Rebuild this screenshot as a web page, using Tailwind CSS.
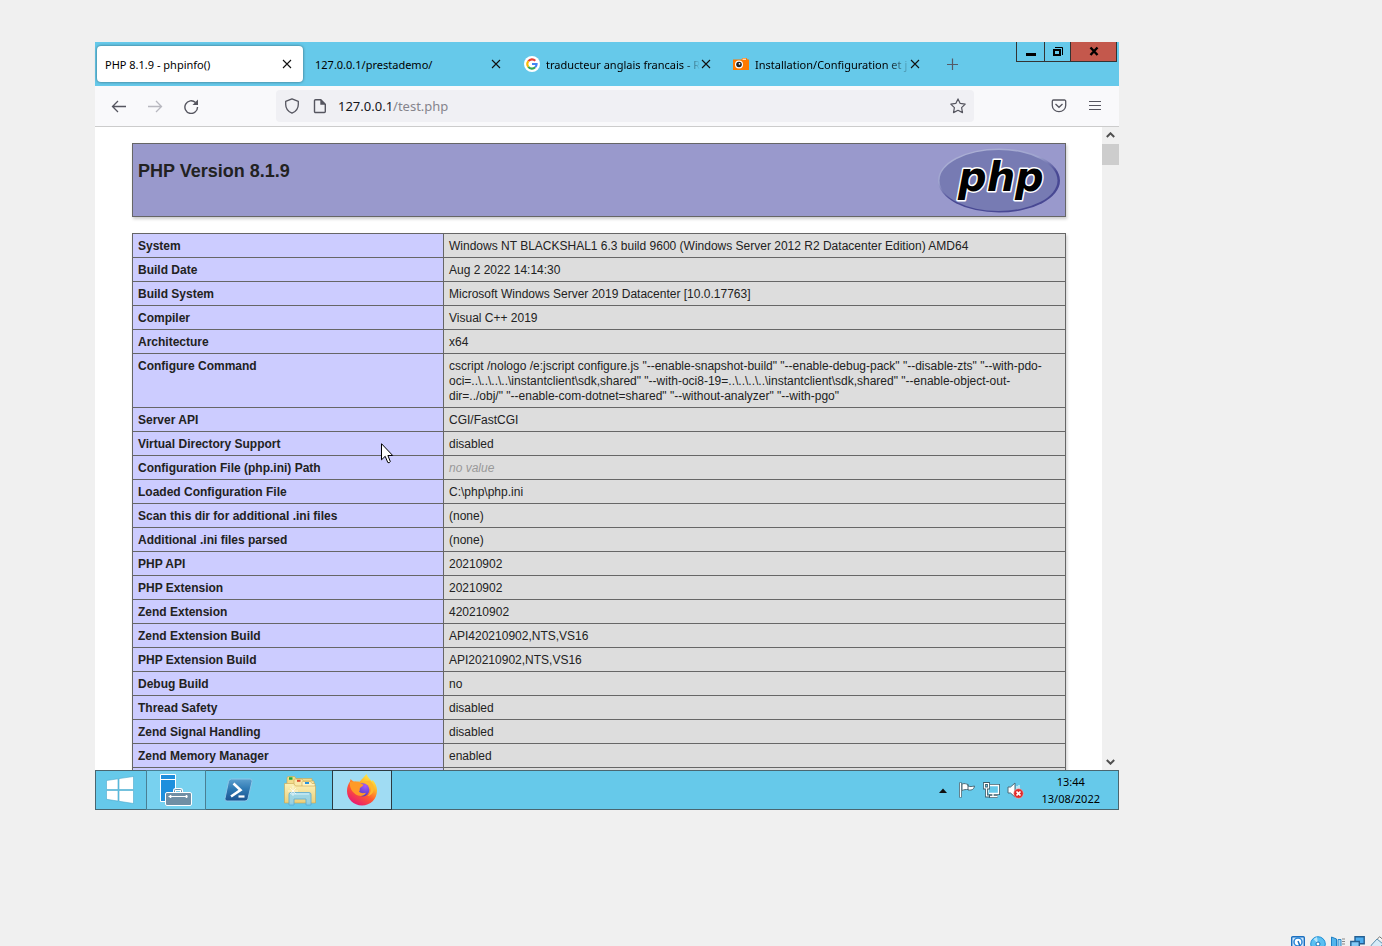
<!DOCTYPE html>
<html lang="fr">
<head>
<meta charset="utf-8">
<title>PHP 8.1.9 - phpinfo()</title>
<script src="https://cdn.jsdelivr.net/npm/@tailwindcss/browser@4"></script>
</head>
<body class="bg-[#f0f0f0]">
<div class="flex h-screen flex-col overflow-hidden font-['Noto_Sans',sans-serif] text-black">
  <main class="relative mt-[42px] mr-[263px] mb-[126px] ml-[95px] flex min-h-0 flex-1 flex-col bg-white">

    <!-- Tab strip -->
    <header class="flex h-11 shrink-0 items-center bg-[#66c9ea] pl-0.5 text-[11px] leading-4">
      <nav class="flex min-w-0 gap-[3px]" aria-label="Onglets">
        <div class="flex h-9 w-[206px] items-center rounded bg-white pr-2.5 pl-2 shadow-[0_0_3px_rgba(0,0,0,0.5)]">
          <a href="#" class="min-w-0 flex-1 overflow-hidden pt-0.5 whitespace-nowrap">PHP 8.1.9 - phpinfo()</a>
          <button aria-label="Fermer"><svg width="12" height="12" viewBox="0 0 12 12" stroke="#111" stroke-width="1.1"><path d="M2 2l8 8M10 2l-8 8"/></svg></button>
        </div>
        <div class="flex h-9 w-[206px] items-center pr-2.5 pl-[9px]">
          <a href="#" class="min-w-0 flex-1 overflow-hidden pt-0.5 whitespace-nowrap">127.0.0.1/prestademo/</a>
          <button aria-label="Fermer"><svg width="12" height="12" viewBox="0 0 12 12" stroke="#111" stroke-width="1.1"><path d="M2 2l8 8M10 2l-8 8"/></svg></button>
        </div>
        <div class="flex h-9 w-[206px] items-center pr-[9px] pl-[9px]">
          <svg class="mr-1.5 shrink-0" width="16" height="16" viewBox="0 0 16 16"><circle cx="8" cy="8" r="8" fill="#fff"/><g fill="none" stroke-width="2.1"><path d="M4.300 5.200A4.600 4.600 0 0 1 11.300 4.800" stroke="#ea4335"/><path d="M4.300 10.800a4.600 4.600 0 0 1 0-5.600" stroke="#fbbc05"/><path d="M11.200 11.300a4.600 4.600 0 0 1-6.900-.5" stroke="#34a853"/><path d="M8 8h4.600a4.600 4.600 0 0 1-1.400 3.300" stroke="#4285f4"/></g></svg>
          <a href="#" class="min-w-0 flex-1 overflow-hidden bg-linear-to-r from-black from-90% to-black/0 bg-clip-text pt-0.5 whitespace-nowrap text-transparent">traducteur anglais francais - R</a>
          <button aria-label="Fermer"><svg width="12" height="12" viewBox="0 0 12 12" stroke="#111" stroke-width="1.1"><path d="M2 2l8 8M10 2l-8 8"/></svg></button>
        </div>
        <div class="flex h-9 w-[206px] items-center pr-[9px] pl-[9px]">
          <svg class="mr-1.5 shrink-0" width="16" height="16" viewBox="0 0 16 16"><path d="M0 3.500h8.500L9.500 2h4l1 1.500H16V14H0z" fill="#ff7a00"/><path d="M9.500 3.200h3.500" stroke="#fff"/><circle cx="6" cy="8.500" r="4" fill="#fff"/><circle cx="6" cy="8.500" r="2.800" fill="#222"/><circle cx="6.500" cy="7.800" r=".9" fill="#fff"/></svg>
          <a href="#" class="min-w-0 flex-1 overflow-hidden bg-linear-to-r from-black from-85% to-black/10 bg-clip-text pt-0.5 whitespace-nowrap text-transparent">Installation/Configuration et j</a>
          <button aria-label="Fermer"><svg width="12" height="12" viewBox="0 0 12 12" stroke="#111" stroke-width="1.1"><path d="M2 2l8 8M10 2l-8 8"/></svg></button>
        </div>
      </nav>
      <button class="ml-4" aria-label="Nouvel onglet"><svg width="14" height="14" viewBox="0 0 14 14" stroke="#555b66" stroke-width="1.2"><path d="M6.500 1.500v11.500M1 7.500h11"/></svg></button>
      <div class="mr-0.5 ml-auto flex self-start border border-t-0 border-[#333]">
        <button aria-label="Réduire" class="flex h-[19px] w-7 items-center justify-center border-r border-[#333]"><svg width="12" height="12"><path d="M1 7h10v3H1z"/></svg></button>
        <button aria-label="Restaurer" class="flex h-[19px] w-[26px] items-center justify-center border-r border-[#333]"><svg width="12" height="12" fill="none" stroke="#000"><path d="M2 4h6v5H2z" stroke-width="2"/><path d="M3 1.500h7.500V9" /></svg></button>
        <button aria-label="Fermer la fenêtre" class="flex h-[19px] w-[45px] items-center justify-center bg-[#c4584c]"><svg width="10" height="12" stroke="#000" stroke-width="2.400"><path d="M1.500 1.500l7 7.500M8.500 1.500l-7 7.500"/></svg></button>
      </div>
    </header>

    <!-- Navigation toolbar -->
    <div class="flex h-[41px] shrink-0 items-center border-b border-[#ccc] bg-[#f9f9fb] pl-4">
      <button aria-label="Précédent"><svg width="16" height="16" fill="none" stroke="#55555f" stroke-width="1.300"><path d="M15 8.500H1.500M7 3L1.500 8.500 7 14"/></svg></button>
      <button aria-label="Suivant" class="ml-5"><svg width="16" height="16" fill="none" stroke="#b8b8bf" stroke-width="1.300"><path d="M1 8.500h13.500M9 3l5.500 5.500L9 14"/></svg></button>
      <button aria-label="Actualiser" class="ml-5"><svg width="16" height="16" fill="none" stroke="#55555f" stroke-width="1.400"><path d="M12.500 4.500A6.300 6.300 0 1 0 14.500 9"/><path d="M15 1.500V7H9.500z" fill="#55555f" stroke="none"/></svg></button>
      <div class="ml-[77px] flex h-8 min-w-0 flex-1 items-center rounded bg-[#f0f0f4] px-2">
        <svg width="16" height="16" fill="none" stroke="#55555f" stroke-width="1.300"><path d="M8 .8l6.300 2.500v3.200C14.300 10.500 11.500 13.700 8 15.200 4.500 13.700 1.700 10.500 1.700 6.500V3.300z" stroke-linejoin="round"/></svg>
        <svg class="ml-3" width="16" height="16" fill="none" stroke="#55555f" stroke-width="1.400"><path d="M3.500 1.700h5.300l4.500 4.500v7.300a1 1 0 0 1-1 1H3.500a1 1 0 0 1-1-1V2.700a1 1 0 0 1 1-1z"/><path d="M8.300 1.500v5.200h5.200z" fill="#55555f" stroke="none"/></svg>
        <div class="ml-2.5 flex-1 pt-0.5 text-[13px] text-[#15141a]">127.0.0.1<span class="text-[#85848c]">/test.php</span></div>
        <button aria-label="Marquer cette page"><svg width="16" height="16" fill="none" stroke="#55555f" stroke-width="1.200" stroke-linejoin="round"><path d="M8 .9l2.200 4.500 5 .7-3.600 3.500.9 5L8 12.300l-4.500 2.300.9-5L.8 6.100l5-.7z"/></svg></button>
      </div>
      <button class="ml-[77px]" aria-label="Pocket"><svg width="16" height="16" fill="none" stroke="#55555f" stroke-width="1.300"><path d="M2.500 2h11a1.200 1.200 0 0 1 1.200 1.200V7.500a6.700 6.200 0 0 1-13.400 0V3.200A1.200 1.200 0 0 1 2.500 2z"/><path d="M4.500 6L8 9.300 11.500 6"/></svg></button>
      <button class="mr-4 ml-5" aria-label="Menu"><svg width="16" height="16" stroke="#55555f" stroke-width="1.200"><path d="M2 3.500h12M2 7.500h12M2 11.500h12"/></svg></button>
    </div>

    <!-- Page -->
    <div class="flex min-h-0 flex-1">
      <div class="min-w-0 flex-1 overflow-hidden pt-4 pr-9 pl-[37px] font-['Liberation_Sans',sans-serif] text-[12px] leading-[15px] text-[#222]">
        <div class="flex h-[74px] items-start justify-between border border-[#666] bg-[#9999cc] px-[5px] shadow-[1px_2px_3px_#ccc]">
          <h1 class="pt-4 text-[18px] leading-[22px] font-bold">PHP Version 8.1.9</h1>
          <svg class="mt-1" width="122" height="65" viewBox="0 0 122 65" role="img" aria-label="PHP">
            <defs><linearGradient id="rim" x1=".2" y1="0" x2=".7" y2="1"><stop offset="0" stop-color="#aeb2d5"/><stop offset=".35" stop-color="#9fa4cf"/><stop offset=".6" stop-color="#484893"/></linearGradient></defs>
            <ellipse cx="61" cy="32.500" rx="61" ry="32" fill="url(#rim)"/>
            <ellipse cx="60.500" cy="32.500" rx="59" ry="30.500" fill="#777bb3"/>
            <text x="20" y="43" font-family="DejaVu Sans" font-size="40" font-weight="bold" font-style="italic" stroke="#fff" stroke-width="3" stroke-linejoin="round" paint-order="stroke" fill="#000">php</text>
          </svg>
        </div>
        <table class="mt-4 w-full table-fixed border-collapse shadow-[1px_2px_3px_#ccc] [&_td]:border [&_td]:border-[#666] [&_td]:bg-[#ddd] [&_td]:px-[5px] [&_td]:pt-[5px] [&_td]:pb-[3px] [&_th]:w-[311px] [&_th]:border [&_th]:border-[#666] [&_th]:bg-[#ccccff] [&_th]:px-[5px] [&_th]:pt-[5px] [&_th]:pb-[3px] [&_th]:text-left [&_th]:align-top">
          <tbody>
            <tr><th scope="row">System</th><td>Windows NT BLACKSHAL1 6.3 build 9600 (Windows Server 2012 R2 Datacenter Edition) AMD64</td></tr>
            <tr><th scope="row">Build Date</th><td>Aug 2 2022 14:14:30</td></tr>
            <tr><th scope="row">Build System</th><td>Microsoft Windows Server 2019 Datacenter [10.0.17763]</td></tr>
            <tr><th scope="row">Compiler</th><td>Visual C++ 2019</td></tr>
            <tr><th scope="row">Architecture</th><td>x64</td></tr>
            <tr><th scope="row">Configure Command</th><td>cscript /nologo /e:jscript configure.js "--enable-snapshot-build" "--enable-debug-pack" "--disable-zts" "--with-pdo-<br>oci=..\..\..\..\instantclient\sdk,shared" "--with-oci8-19=..\..\..\..\instantclient\sdk,shared" "--enable-object-out-<br>dir=../obj/" "--enable-com-dotnet=shared" "--without-analyzer" "--with-pgo"</td></tr>
            <tr><th scope="row">Server API</th><td>CGI/FastCGI</td></tr>
            <tr><th scope="row">Virtual Directory Support</th><td>disabled</td></tr>
            <tr><th scope="row">Configuration File (php.ini) Path</th><td><i class="text-[#999]">no value</i></td></tr>
            <tr><th scope="row">Loaded Configuration File</th><td>C:\php\php.ini</td></tr>
            <tr><th scope="row">Scan this dir for additional .ini files</th><td>(none)</td></tr>
            <tr><th scope="row">Additional .ini files parsed</th><td>(none)</td></tr>
            <tr><th scope="row">PHP API</th><td>20210902</td></tr>
            <tr><th scope="row">PHP Extension</th><td>20210902</td></tr>
            <tr><th scope="row">Zend Extension</th><td>420210902</td></tr>
            <tr><th scope="row">Zend Extension Build</th><td>API420210902,NTS,VS16</td></tr>
            <tr><th scope="row">PHP Extension Build</th><td>API20210902,NTS,VS16</td></tr>
            <tr><th scope="row">Debug Build</th><td>no</td></tr>
            <tr><th scope="row">Thread Safety</th><td>disabled</td></tr>
            <tr><th scope="row">Zend Signal Handling</th><td>disabled</td></tr>
            <tr><th scope="row">Zend Memory Manager</th><td>enabled</td></tr>
            <tr><th scope="row">&nbsp;</th><td></td></tr>
          </tbody>
        </table>
      </div>
      <div class="flex w-[17px] shrink-0 flex-col bg-[#f0f0f0]">
        <button aria-label="Défiler vers le haut" class="flex h-[17px] items-center justify-center"><svg width="9" height="7" fill="none" stroke="#505050" stroke-width="2"><path d="M.8 5l3.700-3.700L8.200 5"/></svg></button>
        <div class="h-[21px] bg-[#cdcdcd]"></div>
        <button aria-label="Défiler vers le bas" class="mt-auto flex h-[17px] items-center justify-center"><svg width="9" height="7" fill="none" stroke="#505050" stroke-width="2"><path d="M.8 2l3.700 3.700L8.200 2"/></svg></button>
      </div>
    </div>

    <!-- Taskbar -->
    <footer class="flex h-10 shrink-0 items-stretch border border-[#4a6670] bg-[#66c9ea]">
      <button aria-label="Démarrer" class="flex w-[50px] items-center justify-center pr-0.5"><svg width="28" height="28" viewBox="0 0 28 28" fill="#fff" stroke="#4aa9cc" stroke-width=".6"><path d="M.5 4.500l11.500-1.700v10.700H.5zM13 2.600L27.500.5v13H13zM.5 14.500H12v10.600L.5 23.300zM13 14.500h14.500v13L13 25.300z"/></svg></button>
      <button aria-label="Gestionnaire de serveur" class="-my-px flex w-[60px] items-center justify-center border border-[#4a7f93] bg-[#78d1ef]">
        <svg width="32" height="32" viewBox="0 0 32 32"><path d="M.5.500h15v27H.5z" fill="#1e8fdd" stroke="#fff"/><path d="M0 5.500h16" stroke="#fff"/><path d="M14.500 18v-1.500a1 1 0 0 1 1-1h5a1 1 0 0 1 1 1V18" fill="none" stroke="#fff" stroke-width="3"/><path d="M14.500 18v-1.500a1 1 0 0 1 1-1h5a1 1 0 0 1 1 1V18" fill="none" stroke="#708fa5"/><rect x="5.500" y="18.500" width="26" height="13" rx="1.500" fill="#708fa5" stroke="#fff"/><path d="M8.500 22.500h19" stroke="#fff"/><path d="M10.500 21v3M26.500 21v3" stroke="#fff" stroke-width="1.600"/></svg>
      </button>
      <button aria-label="PowerShell" class="ml-0.5 flex w-[60px] items-center justify-center">
        <svg width="30" height="28" viewBox="0 0 30 28"><defs><linearGradient id="ps" x1="0" y1="0" x2="0" y2="1"><stop offset="0" stop-color="#5c9fce"/><stop offset=".45" stop-color="#2f7ab4"/><stop offset="1" stop-color="#1b5290"/></linearGradient></defs><path d="M8.500 3h18.500q2.500 0 2 2.500L25 22.500q-.6 2.500-3 2.500H4q-2.500 0-2-2.500L5.500 5.500Q6 3 8.500 3z" fill="url(#ps)" stroke="#8cc6e8"/><path d="M10.500 7.500l7 6.500-9.500 6.500" fill="none" stroke="#fff" stroke-width="2.600"/><path d="M15.500 20.500h6" stroke="#fff" stroke-width="2.200"/></svg>
      </button>
      <button aria-label="Explorateur" class="ml-0.5 flex w-[60px] items-center justify-center">
        <svg width="32" height="32" viewBox="0 0 32 32"><defs><linearGradient id="fo" x1="0" y1="0" x2="0" y2="1"><stop offset="0" stop-color="#fcf1b8"/><stop offset="1" stop-color="#ecd07a"/></linearGradient></defs><g stroke="#c9a650" stroke-width=".6"><path d="M3 10V4q0-1.500 1.500-1.500h6L12 4.500h16v8H3z" fill="#f3dc8c"/><path d="M10 10V6q0-1 1-1h7l1.500 2H30v6H10z" fill="#f9e9a9"/><path d="M18 11V8.500q0-1 1-1h7.500L28 9.500h3v6H18z" fill="#fff3c0"/><path d="M.5 9.500h9l2 2.500h20v17H.5z" fill="url(#fo)"/></g><path d="M5 4.500h3.500" stroke="#1fad3f" stroke-width="2.500"/><path d="M13 6.800h3.500" stroke="#d84b2b" stroke-width="2"/><path d="M21 9h4" stroke="#2793de" stroke-width="2"/><path d="M5 31V20.500q0-2 2-2h18q2 0 2 2V31h-5v-6H10v6z" fill="#8fd3f1" fill-opacity=".85" stroke="#5aa9d2" stroke-width=".8"/><path d="M7 20h18" stroke="#d9f3fc"/><path d="M9 12v10M4 17h10M6 14l6 6M12 14l-6 6" stroke="#fff" stroke-opacity=".8" stroke-width=".8"/></svg>
      </button>
      <button aria-label="Firefox" class="-my-px ml-0.5 flex w-[60px] items-center justify-center border border-[#2c3a40] bg-[#a0dcf3]">
        <svg width="32" height="32" viewBox="0 0 32 32"><defs><linearGradient id="ff" x1=".8" y1=".05" x2=".25" y2=".95"><stop offset="0" stop-color="#fff04a"/><stop offset=".3" stop-color="#ffb62a"/><stop offset=".6" stop-color="#ff5a30"/><stop offset="1" stop-color="#e81a72"/></linearGradient><radialGradient id="gl" cx=".7" cy=".2" r=".9"><stop offset="0" stop-color="#a45cff"/><stop offset="1" stop-color="#4a35b5"/></radialGradient></defs><path d="M20.500 0c1 3.500 3.800 5 5.500 7.500l.5-1.500c2.700 2.500 4.500 6.500 4.500 10.500 0 8.500-6.500 15-15 15S1 25 1 17c0-4 1.500-7.500 3-9.500L4.500 5l3.500 3c2-.6 4-.5 5.500-.2C15.500 5.500 18 3 20.500 0z" fill="url(#ff)"/><circle cx="16.800" cy="15.800" r="6.600" fill="url(#gl)"/><path d="M4 8c3-1 7-.5 9 1 1 .8 4 1.200 4.500 1.500-.3 1.800-2.500 2.300-3.500 3.500-.6 1 .3 2.500-1 3.500 1.500 2 4.500 2 7 1.200-1.500 3-5 4-8 2.800C6 19 3 13 4 8z" fill="#ff9a28"/><path d="M18 7.500c4 .5 7 3.500 7 7.500 0 3-1.300 5.500-3.500 7 4-.5 6.500-4 6.500-8 0-3-2-6-4.500-7.500z" fill="#ffb92f"/></svg>
      </button>
      <div class="ml-auto flex items-center">
        <button aria-label="Icônes cachées"><svg width="8" height="5"><path d="M0 5l4-4.500L8 5z" fill="#111"/></svg></button>
        <svg class="ml-3" width="17" height="17" viewBox="0 0 17 17" role="img" aria-label="Centre de maintenance"><path d="M1.500.5v15" stroke="#4c6b78" stroke-width="3"/><path d="M3 2c3-1 4 0 6 .5V4c2 1 4 .5 6.500 0-.5 3-2 4.500-6.500 4v-.5C7 7.500 5 7.500 3 8.500z" fill="#fff" stroke="#4c6b78"/><path d="M9 2.500V8" stroke="#4c6b78"/><path d="M1.500 1v14" stroke="#fff" stroke-width="1.300"/></svg>
        <svg class="ml-[7px]" width="17" height="17" viewBox="0 0 17 17" fill="#66c9ea" role="img" aria-label="Réseau"><path d="M5 3.500h10.500v8H5zM10 12v2.500M6 14.500h8.500" stroke="#3c5b68" stroke-width="3"/><path d="M5 3.500h10.500v8H5zM10 12v2.500M6.500 14.500h8" stroke="#fff" stroke-width="1.300"/><path d="M1.500 1.500h4V6h-4zM3.500 6v8H7" stroke="#3c5b68" stroke-width="2.800"/><path d="M1.500 1.500h4V6h-4zM3.500 6v8H6" fill="none" stroke="#fff" stroke-width="1.200"/></svg>
        <svg class="ml-[7px]" width="17" height="17" viewBox="0 0 17 17" role="img" aria-label="Son coupé"><path d="M1 5h2.500L8 1v14l-4.500-4H1z" fill="#fff" stroke="#4c6b78"/><path d="M10 4v4M12 3v4" stroke="#fff"/><circle cx="11.500" cy="11.500" r="4.800" fill="#e02a2a" stroke="#f7b5b5" stroke-width=".6"/><path d="M9.500 9.500l4 4M13.500 9.500l-4 4" stroke="#fff" stroke-width="1.700"/></svg>
        <time class="mr-[18px] ml-[17px] text-center text-[11px] leading-[17px]">13:44<br>13/08/2022</time>
      </div>
    </footer>

    <!-- Mouse pointer -->
    <svg class="absolute top-[401px] left-[286px]" width="13" height="21" viewBox="0 0 13 21"><path d="M.5.700v16.100l3.700-3.500 2.600 6.200q1.500 1 2.500-.9L6.900 12.500h4.800z" fill="#fff" stroke="#000"/></svg>
  </main>

  <!-- Virtual machine status bar -->
  <div class="flex h-2.5 shrink-0 items-start justify-end gap-[5px] overflow-hidden" aria-label="État de la machine virtuelle">
    <svg class="shrink-0" width="14" height="14"><rect x=".7" y=".7" width="12.600" height="13" rx="1" fill="#cfe6fa" stroke="#1b6fc0" stroke-width="1.400"/><circle cx="7" cy="6" r="4" fill="#fff" stroke="#2b87d8" stroke-width="1.500"/><path d="M7 5l2 5" stroke="#1b6fc0" stroke-width="1.500"/></svg>
    <svg class="shrink-0" width="16" height="16"><circle cx="8" cy="8" r="7.300" fill="#5cc0f2" stroke="#1d8fd6"/><path d="M8 8L3.500 3 7 1z" fill="#b8e5fb"/><circle cx="8" cy="8" r="2" fill="#fff" stroke="#1673b8"/></svg>
    <svg class="shrink-0" width="14" height="16"><path d="M.5 1l5 2v13l-5-2z" fill="#55b5ec" stroke="#2180c4"/><path d="M7 3.500h3V16H7z" fill="#9ed3f3" stroke="#2c8aca"/><path d="M11 3h3M11 5.500h3M11 8h3" stroke="#888"/></svg>
    <svg class="shrink-0" width="15" height="16"><path d="M5 .8h9.200v7H5z" fill="#4daef0" stroke="#245f92" stroke-width="1.400"/><path d="M.8 5.500h8.500v6H.8z" fill="#85cbf7" stroke="#245f92" stroke-width="1.400"/></svg>
    <svg class="shrink-0" width="12" height="16"><path d="M1 9.500L7 3l6 5-6 7z" fill="#d5ebf8" stroke="#5b8fae"/><path d="M7.500 3l2-2.300L13 3.500" fill="#fff" stroke="#777"/></svg>
  </div>
</div>
</body>
</html>
